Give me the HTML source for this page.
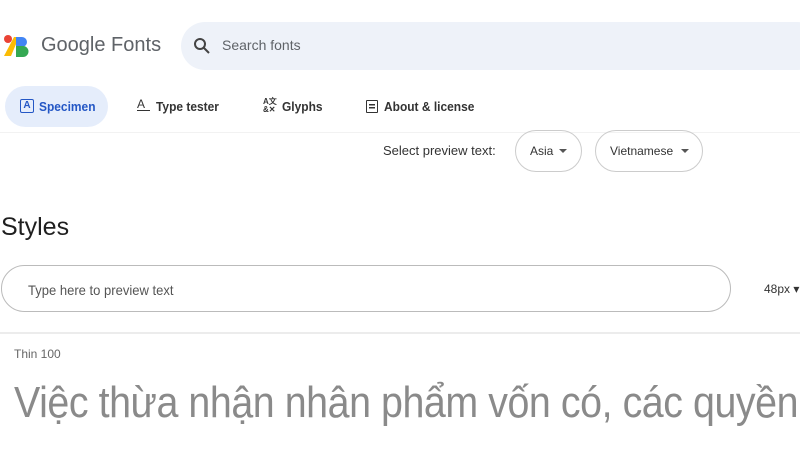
<!DOCTYPE html>
<html><head><meta charset="utf-8"><style>
*{margin:0;padding:0;box-sizing:border-box}
body{width:800px;height:450px;overflow:hidden;background:#fff;font-family:"Liberation Sans",sans-serif;color:#1f1f1f;position:relative}
.a{position:absolute;white-space:nowrap}
</style></head><body>
<svg class="a" style="left:2px;top:34px" width="28" height="24" viewBox="0 0 28 24">
<circle cx="6" cy="5" r="4" fill="#ea4335"/>
<polygon points="2,22 12,3 17,3 9,22" fill="#fbbc04"/>
<path d="M14 3h6a5 5 0 0 1 0 10h-6z" fill="#4285f4"/>
<path d="M14 12h7a5.5 5.5 0 0 1 0 11h-7z" fill="#34a853"/>
</svg>
<div class="a" style="left:41px;top:34px;font-size:20px;color:#5f6368">Google Fonts</div>
<div class="a" style="left:181px;top:22px;width:640px;height:48px;border-radius:24px;background:#eef2f9"></div>
<svg class="a" style="left:193px;top:37px" width="18" height="18" viewBox="0 0 18 18"><circle cx="7" cy="7" r="5" stroke="#444" stroke-width="2" fill="none"/><path d="M11 11l5 5" stroke="#444" stroke-width="2"/></svg>
<div class="a" style="left:222px;top:37px;font-size:14px;color:#5f6368">Search fonts</div>
<div class="a" style="left:5px;top:86px;width:103px;height:41px;border-radius:21px;background:#e5edfb"></div>
<div class="a" style="left:20px;top:99px;width:14px;height:14px;border:1.5px solid #2457c5;border-radius:2px;font-size:10px;font-weight:bold;color:#2457c5;text-align:center;line-height:11px">A</div>
<div class="a" style="left:39px;top:99px;font-size:13px;font-weight:bold;color:#2457c5;transform:scaleX(.92);transform-origin:left">Specimen</div>
<div class="a" style="left:137px;top:97px;font-size:12px;color:#333">A<div style="width:13px;border-top:1px solid #333;margin-top:-1px"></div></div>
<div class="a" style="left:156px;top:99px;font-size:13px;font-weight:bold;color:#333;transform:scaleX(.92);transform-origin:left">Type tester</div>
<div class="a" style="left:263px;top:98px;font-size:8px;line-height:8px;font-weight:bold;color:#333">A文<br>&amp;✕</div>
<div class="a" style="left:282px;top:99px;font-size:13px;font-weight:bold;color:#333;transform:scaleX(.92);transform-origin:left">Glyphs</div>
<div class="a" style="left:366px;top:100px;width:12px;height:13px;border:1.5px solid #333;border-radius:1px;background:linear-gradient(#333,#333) 2px 3px/6px 1.5px no-repeat,linear-gradient(#333,#333) 2px 6px/6px 1.5px no-repeat"></div>
<div class="a" style="left:384px;top:99px;font-size:13px;font-weight:bold;color:#333;transform:scaleX(.92);transform-origin:left">About &amp; license</div>
<div class="a" style="left:0;top:132px;width:800px;height:1px;background:#f2f2f2"></div>
<div class="a" style="left:383px;top:143px;font-size:13px;color:#333">Select preview text:</div>
<div class="a" style="left:515px;top:130px;width:67px;height:42px;border:1px solid #ccc;border-radius:21px"></div>
<div class="a" style="left:530px;top:144px;font-size:12px;color:#333">Asia</div>
<div class="a" style="left:559px;top:149px;border:4px solid transparent;border-top:4px solid #555"></div>
<div class="a" style="left:595px;top:130px;width:108px;height:42px;border:1px solid #ccc;border-radius:21px"></div>
<div class="a" style="left:610px;top:144px;font-size:12px;color:#333">Vietnamese</div>
<div class="a" style="left:681px;top:149px;border:4px solid transparent;border-top:4px solid #555"></div>
<div class="a" style="left:1px;top:213px;font-size:25px;color:#1f1f1f">Styles</div>
<div class="a" style="left:1px;top:265px;width:730px;height:47px;border:1px solid #bbb;border-radius:24px"></div>
<div class="a" style="left:28px;top:282px;font-size:14px;color:#555;transform:scaleX(.93);transform-origin:left">Type here to preview text</div>
<div class="a" style="left:764px;top:282px;font-size:12px;color:#333">48px ▾</div>
<div class="a" style="left:0;top:332px;width:800px;height:2px;background:#ececec"></div>
<div class="a" style="left:14px;top:347px;font-size:12px;color:#666">Thin 100</div>
<div class="a" style="left:14px;top:378px;font-size:44px;color:#8a8a8a;transform:scaleX(.895);transform-origin:left;letter-spacing:-0.5px">Việc thừa nhận nhân phẩm vốn có, các quyền</div>
</body></html>
